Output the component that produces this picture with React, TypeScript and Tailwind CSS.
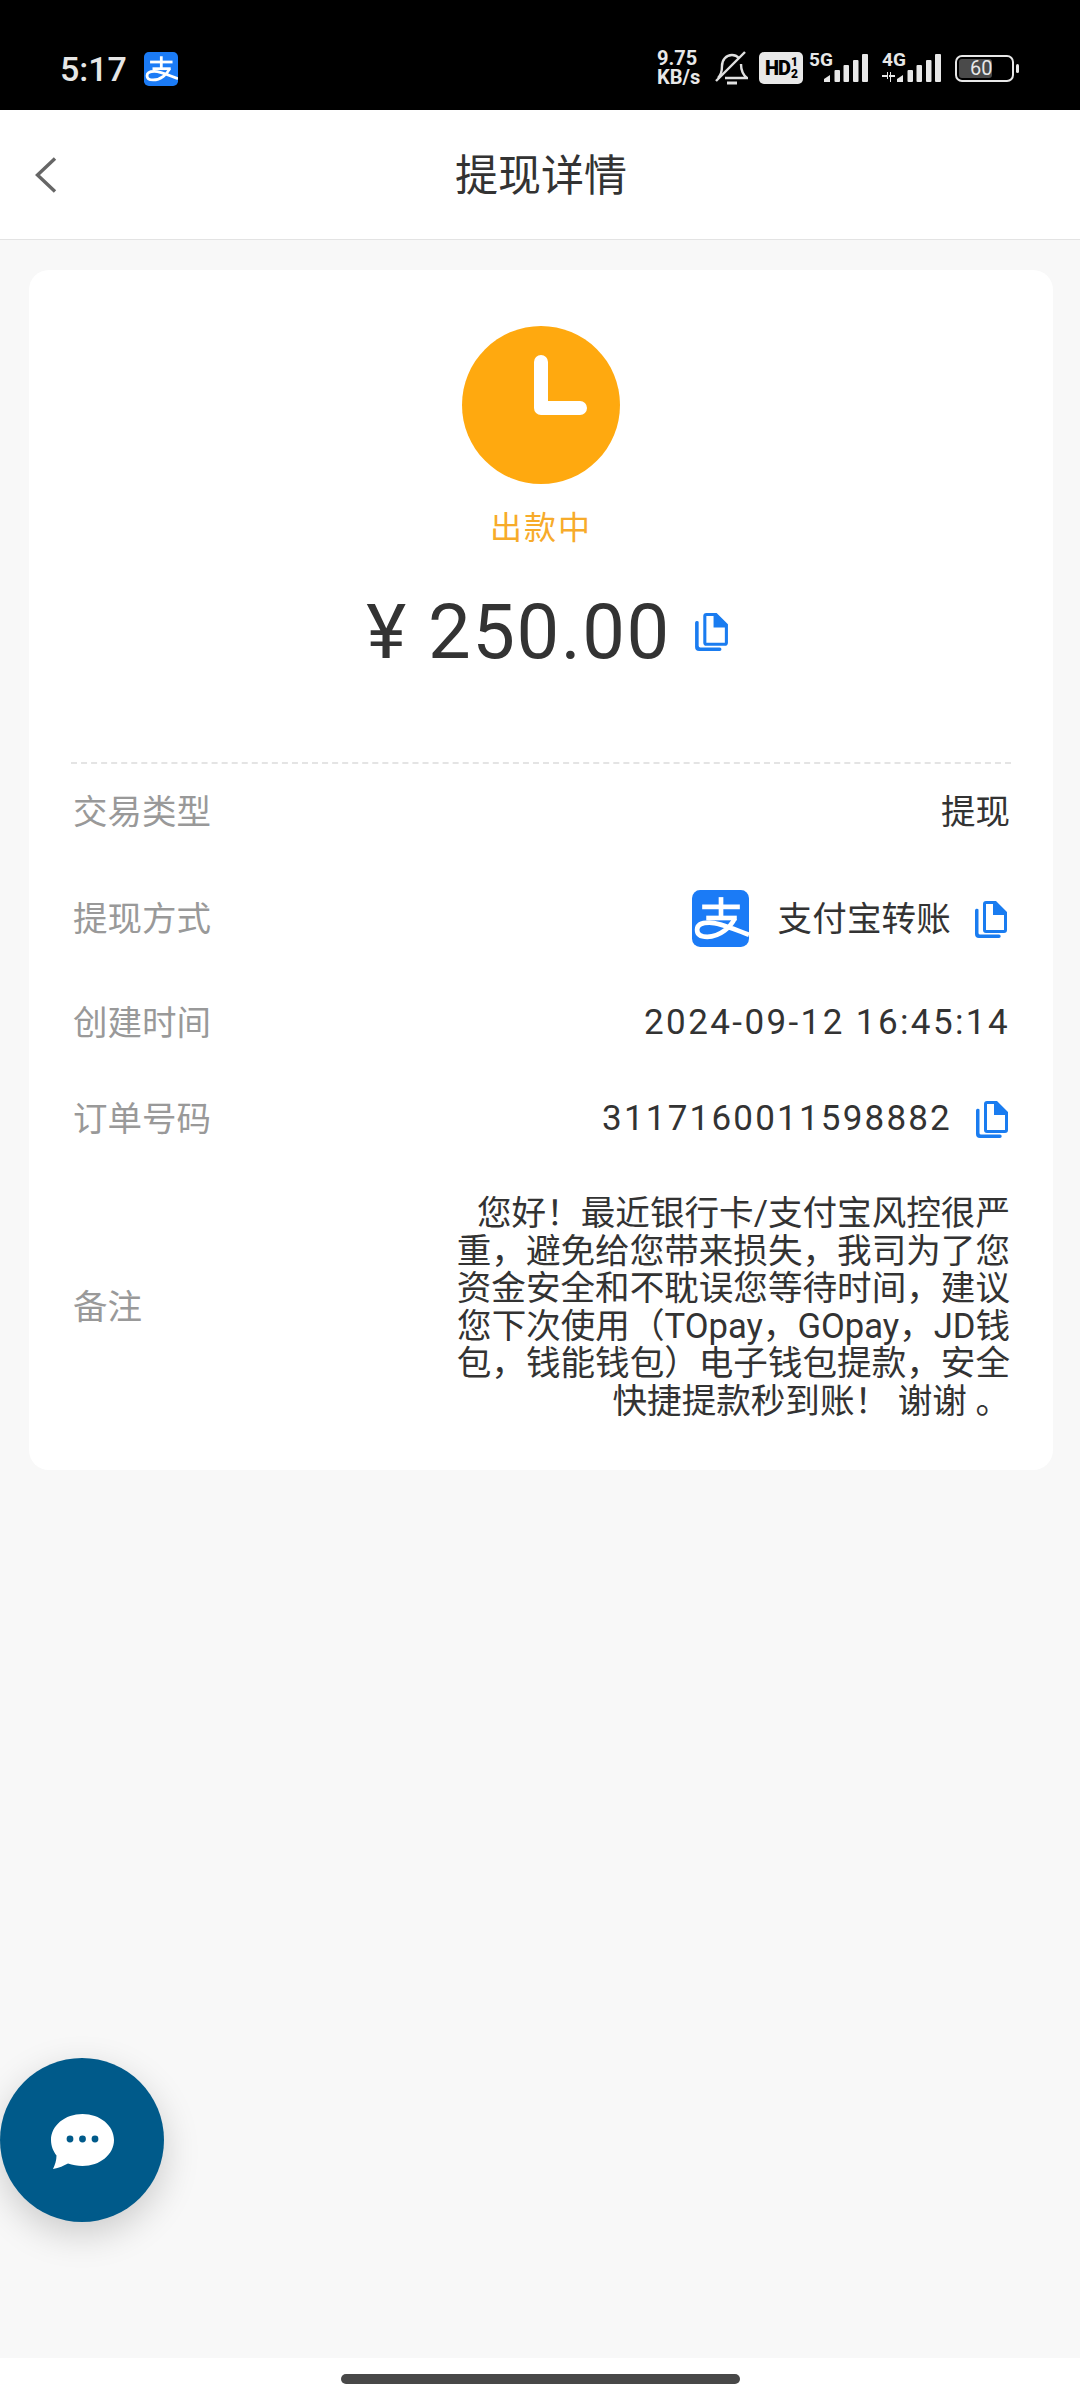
const sans = "font-['Roboto','Noto_Sans_CJK_SC',sans-serif]";

function CopyIcon({ className }: { className: string }) {
  return (
    <svg viewBox="0 0 32 37" className={className} fill="#1a7cf0">
      <path
        fillRule="evenodd"
        d="M11 0h10l11 11v18a3 3 0 0 1-3 3H11a3 3 0 0 1-3-3V3a3 3 0 0 1 3-3zm0 3v26h18V14H18V3z"
      />
      <path d="M0 9.5a2 2 0 0 1 3.5-1V32a1.6 1.6 0 0 0 1.6 1.6H24a1.7 1.7 0 0 1 0 3.4H4a4 4 0 0 1-4-4z" />
    </svg>
  );
}

// Alipay mark: rounded blue tile with the white 支 ribbon
function AlipayIcon({ className }: { className: string }) {
  return (
    <svg viewBox="0 0 56 56" className={className}>
      <path
        d="M8 0h40a8 8 0 0 1 8 8v40a8 8 0 0 1-8 8H8a8 8 0 0 1-8-8V8a8 8 0 0 1 8-8z"
        fill="#1b7bf6"
      />
      <g fill="none" stroke="#fff" strokeWidth="4.6">
        <path d="M10 16.500h37" />
        <path d="M28.500 7v21" />
        <path d="M14 27.500h30" />
        <path d="M42 28C38 36 28 46 15 46 8 46 5 43 5 39c0-5 5-7 12-7 11 0 25 7 39 12" />
      </g>
    </svg>
  );
}

function SignalBars({ className }: { className: string }) {
  return (
    <svg viewBox="0 0 44 28" className={className} fill="#e8e8e8">
      <path d="M0 28v-3l6-4v7z" />
      <rect x="10.500" y="16" width="5.500" height="12" rx="1" />
      <rect x="19.500" y="11" width="5.500" height="17" rx="1" />
      <rect x="29" y="6" width="5.500" height="22" rx="1" />
      <rect x="38" y="0" width="6" height="28" rx="1" />
    </svg>
  );
}

function StatusBar() {
  return (
    <div className={`flex h-[110px] items-end justify-between bg-black pb-[23px] pl-[60px] pr-[61px] ${sans}`}>
      <div className="flex items-center">
        <span className="text-[34px] leading-[36px] font-medium text-[#e6e6e6]">5:17</span>
        <AlipayIcon className="ml-[17px] h-[34px] w-[34px]" />
      </div>
      <div className="flex items-center">
        <div className="flex w-[47px] flex-col items-start text-[20px] leading-[19px] font-bold whitespace-nowrap text-[#e8e8e8]">
          <span>9.75</span>
          <span>KB/s</span>
        </div>
        <svg viewBox="0 0 33 34" className="ml-[11px] h-[34px] w-[33px]" fill="none" stroke="#e0e0e0" strokeWidth="2.4">
          <path d="M3 27c3-3 4-6 4-12 0-6 4-11 10-11 3 0 5 1 7 3M26 13c0 6 1 10 6 14H10" />
          <path d="M1 30 30 1" />
          <path d="M12 32h10" strokeWidth="3" />
        </svg>
        <div className="ml-[11px] flex h-[32px] w-[44px] items-center justify-center rounded-[5px] bg-[#e8e8e8] text-[20px] font-black tracking-[-1px] text-black">
          HD
          <span className="ml-[1px] flex flex-col text-[12px] leading-[12px]">
            <span>1</span>
            <span>2</span>
          </span>
        </div>
        <div className="relative ml-[6px] h-[34px] w-[59px]">
          <span className="absolute left-0 top-[-1px] text-[19px] leading-[20px] font-bold text-[#e8e8e8]">5G</span>
          <SignalBars className="absolute bottom-[3px] right-0 h-[28px] w-[44px]" />
        </div>
        <div className="relative ml-[14px] h-[34px] w-[59px]">
          <span className="absolute left-0 top-[-1px] text-[19px] leading-[20px] font-bold text-[#e8e8e8]">4G</span>
          <svg viewBox="0 0 13 10" className="absolute bottom-[3px] left-0 h-[10px] w-[13px]" fill="#e8e8e8">
            <path d="M0 3h5V0h1v7H5V5H0zM7 3h1v-3h1v3h4v2H9v5H8V5H7z" />
          </svg>
          <SignalBars className="absolute bottom-[3px] right-0 h-[28px] w-[44px]" />
        </div>
        <div className="relative ml-[14px] flex h-[27px] w-[59px] items-center rounded-[7px] border-[2.5px] border-[#e8e8e8] p-[2px]">
          <div className="h-full w-[33px] rounded-[3px] bg-[#4a4a4a]" />
          <span className="absolute left-[13px] text-[20px] leading-none text-[#e8e8e8]">60</span>
        </div>
        <div className="ml-[2px] h-[9px] w-[3px] rounded-[2px] bg-[#e8e8e8]" />
      </div>
    </div>
  );
}

function Row({ label, height, children }: { label: string; height: string; children: React.ReactNode }) {
  return (
    <div className={`flex items-center justify-between pl-[2px] pr-[1px] pt-[3px] ${height}`}>
      <span className="text-[34.5px] text-[#999999]">{label}</span>
      <div className="flex items-center text-[34.5px] text-[#333333]">{children}</div>
    </div>
  );
}

export default function App() {
  return (
    <div className={`flex h-[2400px] w-[1080px] flex-col overflow-hidden bg-[#f8f8f8] ${sans}`}>
      <StatusBar />

      <header className="relative flex h-[130px] items-center justify-center border-b border-[#e3e3e3] bg-white pl-[2px] pt-[4px]">
        <svg viewBox="0 0 24 36" className="absolute left-[34px] top-[47px] h-[36px] w-[24px]" fill="none" stroke="#666666" strokeWidth="3.4">
          <path d="M21 1.500 3.500 18 21 34.500" />
        </svg>
        <h1 className="text-[43px] font-normal text-[#333333]">提现详情</h1>
      </header>

      <main className="ml-[29px] mt-[30px] h-[1200px] w-[1024px] rounded-[20px] bg-white px-[42px]">
        <div className="flex h-[494px] flex-col items-center border-b-2 border-dashed border-[#e4e4e4]">
          <div className="mt-[56px] flex h-[158px] w-[158px] items-center justify-center rounded-full bg-[#ffa90f]">
            <svg viewBox="0 0 158 158" className="h-[158px] w-[158px]" fill="none" stroke="#fff" strokeWidth="14" strokeLinecap="round" strokeLinejoin="round">
              <path d="M79 36v46h39" />
            </svg>
          </div>
          <p className="mt-[22px] text-[32px] leading-[44px] tracking-[2px] text-[#f7ab2a]">出款中</p>
          <div className="mt-[38px] flex items-center pl-[12px]">
            <span className="text-[76px] leading-[88px] tracking-[1.5px] text-[#333333]">¥ 250.00</span>
            <CopyIcon className="ml-[24px] h-[38px] w-[33px]" />
          </div>
        </div>

        <Row label="交易类型" height="h-[94px]">提现</Row>
        <Row label="提现方式" height="h-[120px]">
          <AlipayIcon className="mb-[3px] h-[57px] w-[57px]" />
          <span className="ml-[29px] tracking-[0.2px]">支付宝转账</span>
          <CopyIcon className="ml-[24px] mr-[3px] h-[37px] w-[32px]" />
        </Row>
        <Row label="创建时间" height="h-[88px]">
          <span className="text-[35px] tracking-[2.400px]">2024-09-12 16:45:14</span>
        </Row>
        <Row label="订单号码" height="h-[104px]">
          <span className="text-[35px] tracking-[2.200px]">3117160011598882</span>
          <CopyIcon className="ml-[24px] mr-[2px] h-[37px] w-[32px]" />
        </Row>
        <div className="mt-[25px] flex items-center justify-between pl-[2px]">
          <span className="text-[34.5px] text-[#999999]">备注</span>
          <p className="w-[560px] pr-[1px] text-right text-[34.6px] leading-[37.600px] text-[#333333]">
            您好！最近银行卡/支付宝风控很严重，避免给您带来损失，我司为了您资金安全和不耽误您等待时间，建议您下次使用（TOpay，GOpay，JD钱包，钱能钱包）电子钱包提款，安全快捷提款秒到账！ 谢谢 。
          </p>
        </div>
      </main>

      <div className="flex-1" />

      <button className="mb-[136px] flex h-[164px] w-[164px] items-center justify-center rounded-full bg-[#005a8a] shadow-[0_12px_36px_rgba(0,0,0,0.18)]">
        <svg viewBox="0 0 63 55" className="mt-[3px] h-[55px] w-[63px]">
          <path
            d="M31.500 0C14 0 0 11.500 0 26c0 6.500 2.500 11.500 5.500 15.500C5.500 46 4 51 2 55c6-1 11-3.500 15-5.500 4.500 1.500 9.500 2.500 14.500 2.500C49 52 63 40.500 63 26S49 0 31.500 0z"
            fill="#fff"
          />
          <circle cx="19" cy="25" r="3.400" fill="#005a8a" />
          <circle cx="31.500" cy="25" r="3.400" fill="#005a8a" />
          <circle cx="44" cy="25" r="3.400" fill="#005a8a" />
        </svg>
      </button>

      <div className="flex h-[42px] items-start justify-center bg-white pt-[16px]">
        <div className="h-[10px] w-[399px] rounded-full bg-[#484848]" />
      </div>
    </div>
  );
}
